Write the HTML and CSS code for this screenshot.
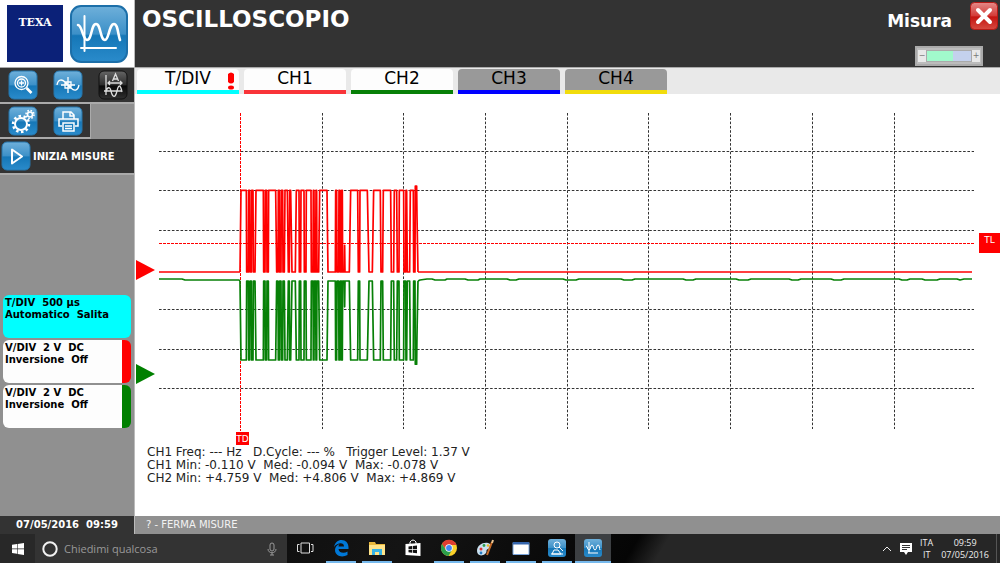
FILE: index.html
```html
<!DOCTYPE html>
<html lang="it">
<head>
<meta charset="utf-8">
<title>Oscilloscopio</title>
<link rel="stylesheet" href="styles.css">
</head>
<body>
<svg class="defs" aria-hidden="true">
  <defs>
    <linearGradient id="blue" x1="0" y1="0" x2="0" y2="1">
      <stop offset="0" stop-color="#6fb0da"/><stop offset=".5" stop-color="#3c90c8"/><stop offset=".53" stop-color="#1577b7"/><stop offset="1" stop-color="#2a8bcb"/>
    </linearGradient>
    <linearGradient id="dark" x1="0" y1="0" x2="0" y2="1">
      <stop offset="0" stop-color="#666"/><stop offset=".5" stop-color="#2c2c2c"/><stop offset=".53" stop-color="#080808"/><stop offset="1" stop-color="#303030"/>
    </linearGradient>
    <linearGradient id="red" x1="0" y1="0" x2="0" y2="1">
      <stop offset="0" stop-color="#e58a88"/><stop offset=".5" stop-color="#d33a36"/><stop offset=".53" stop-color="#c41410"/><stop offset="1" stop-color="#d64a40"/>
    </linearGradient>
    <path id="burst" d="M45 0L48-245H64L65 0H70L71-245H74L75 0H79L80-245H84L85 0H90L93-245H115L116 0H120L121-245H125L126 0H130L131-245H152L155 0H159L160-245H163L164 0H168L169-245H173L174 0H178L180-245H187L190 0H193L194-245H197L201 0H211L214-245H222L223 0H227L228-245H237L238 0H243L244-245H258L259 0H264L265-245H267L268 0H272L273-245H275L276 0H281L284-245H306L309 0H331L332-245H335L336 0H341L342-245H345L346 0H349L350-245H352L353 0H358L359-80L360 0H373L377-245H398L400 0H404L405-245H427L432 0H442L446-245H466L468 0H473L475-245H497L499 0H506L508-245H515L517 0H522L523-245H536L537 0H542L543-245H545L547 0H554L556-245H565L566 0H570L571-258H575L576-170L579 0"/>
  </defs>
</svg>
<div class="app">
  <aside class="sidebar">
    <div class="brand">
      <div class="texa">TEXA</div>
      <svg class="brand-icon" viewBox="0 0 58 58" aria-hidden="true">
        <rect x="1" y="1" width="56" height="56" rx="10" fill="url(#blue)" stroke="#1c6fa9" stroke-width="2"/>
        <g fill="none" stroke="#fff" stroke-linecap="round" stroke-width="2"><path d="M14.500 11v35M11 43h35"/><path stroke-width="2.600" d="M8 20C12 20 13 35 17 35C22 35 21 19 26 19C31 19 30 35 35 35C39 35 39 19 44 19C48 19 48 30 50 35"/></g>
      </svg>
    </div>
    <div class="tools">
      <button class="tool" aria-label="Zoom"><svg viewBox="0 0 30 30"><rect x="1" y="1" width="28" height="28" rx="5" fill="url(#blue)" stroke="#2676ac"/><g fill="none" stroke="#fff" stroke-width="1.300"><circle cx="13.500" cy="13" r="6.500"/><circle cx="13.500" cy="13" r="4"/><path d="M11 13h5M13.500 10.500v5"/><path stroke-width="2.600" d="M18.500 18l5 5"/></g></svg></button>
      <button class="tool" aria-label="Cursori"><svg viewBox="0 0 30 30"><rect x="1" y="1" width="28" height="28" rx="5" fill="url(#blue)" stroke="#2676ac"/><g fill="none" stroke="#fff" stroke-width="1.300"><path d="M4 15C5 9 9 9 12 12L18 18C22 22 25 20 26 15M12 12h6v6h-6zM15 7v16M8 15h14"/></g></svg></button>
      <button class="tool" aria-label="Scala automatica"><svg viewBox="0 0 30 30"><rect x="1" y="1" width="28" height="28" rx="5" fill="url(#dark)" stroke="#111"/><g fill="none" stroke="#ddd" stroke-width="1.300"><path d="M8 5v20M6 21h18M14.500 11l3-7 3 7M15.500 9h4M10 13h14M12 11l-2 2 2 2M22 11l2 2-2 2M8 22c1-5 4-6 5-1s4 9 6 0 4-4 5 1"/></g></svg></button>
    </div>
    <div class="tools tools-short">
      <button class="tool" aria-label="Impostazioni"><svg viewBox="0 0 30 30"><rect x="1" y="1" width="28" height="28" rx="5" fill="url(#blue)" stroke="#2676ac"/><g fill="none" stroke="#fff"><circle cx="13" cy="18" r="6" stroke-width="2"/><circle cx="13" cy="18" r="8" stroke-width="2.500" stroke-dasharray="2.500 2.500"/><circle cx="22" cy="8.500" r="2.500" stroke-width="1.600"/><circle cx="22" cy="8.500" r="4" stroke-width="1.600" stroke-dasharray="1.600 1.540"/></g></svg></button>
      <button class="tool" aria-label="Stampa"><svg viewBox="0 0 30 30"><rect x="1" y="1" width="28" height="28" rx="5" fill="url(#blue)" stroke="#2676ac"/><g fill="none" stroke="#fff" stroke-width="1.500"><path d="M10 13V6h8l3 3v4M17 6v4h4M9 20H6v-7h19v7h-3M10 17h11v8H10zM12 20h7M12 22.500h7"/></g></svg></button>
    </div>
    <button class="start-measure"><svg viewBox="0 0 30 30" aria-hidden="true"><rect x="1" y="1" width="28" height="28" rx="5" fill="url(#blue)" stroke="#2676ac"/><path d="M11 8.500v14L21 15.500z" fill="none" stroke="#fff" stroke-width="2" stroke-linejoin="round"/></svg>INIZIA MISURE</button>
    <div class="cards">
      <button class="card card-time">T/DIV&nbsp; 500 µs<br>Automatico&nbsp; Salita</button>
      <button class="card card-red">V/DIV&nbsp; 2 V&nbsp; DC<br>Inversione&nbsp; Off</button>
      <button class="card card-green">V/DIV&nbsp; 2 V&nbsp; DC<br>Inversione&nbsp; Off</button>
    </div>
    <time class="clock">07/05/2016&nbsp; 09:59</time>
  </aside>
  <main class="main">
    <header class="header">
      <h1 class="title">OSCILLOSCOPIO</h1>
      <div class="header-side">
        <div class="mode"><span>Misura</span><button class="close" aria-label="Chiudi"><svg viewBox="0 0 28 28"><rect x=".5" y=".5" width="27" height="27" rx="4" fill="url(#red)" stroke="#b51a16"/><path d="M8 8l12 12M20 8L8 20" stroke="#fff" stroke-width="4" stroke-linecap="round"/></svg></button></div>
        <div class="battery"><span class="pole">−</span><span class="level"></span><span class="pole">+</span></div>
      </div>
    </header>
    <nav class="tabs">
      <button class="tab tab-time">T/DIV<svg class="alert" viewBox="0 0 8 18" aria-hidden="true"><path d="M1 2q3-3 6 0v8q-3 3-6 0z" fill="red"/><ellipse cx="4" cy="15.500" rx="3" ry="2" fill="red"/></svg></button>
      <button class="tab tab-ch1">CH1</button>
      <button class="tab tab-ch2">CH2</button>
      <button class="tab tab-ch3">CH3</button>
      <button class="tab tab-ch4">CH4</button>
    </nav>
    <svg class="chart" viewBox="0 0 865 351" role="img" aria-label="Tracce CH1 e CH2">
      <path class="grid" d="M24 57.500H839M24 96.500H839M24 136.500H839M24 215.500H839M24 255.500H839M24 294.500H839M187.500 19V335M268.500 19V335M350.500 19V335M432.500 19V335M513.500 19V335M595.500 19V335M677.500 19V335M759.500 19V335"/>
      <path class="trigger" d="M105.500 19V337M24 149.500H840"/>
      <path class="trace trace-red" d="M24 178H105M283 178H837"/>
      <use href="#burst" class="trace trace-red" transform="translate(90 178) scale(.3333)"/>
      <path class="trace trace-green" d="M24 185H47L50 186H104L105 187M283 187L285 186 292 185H297L300 186H310L312 185H330L333 186H343L345 185H372L375 186H381L384 185H428L431 186H441L444 185H486L489 186H497L500 185H548L551 186H558L561 185H601L604 186H613L616 185H654L657 186H663L666 185H696L699 186H706L709 185H764L767 186H772L775 185H787L790 186H802L805 185H822L825 186L829 185H837"/>
      <use href="#burst" class="trace trace-green" transform="translate(90 187) scale(.3333 -.3224)"/>
      <path d="M1 166L20 176L1 186z" fill="red"/>
      <path d="M1 270L20 280L1 290z" fill="green"/>
      <rect x="101" y="338" width="13" height="13" fill="red"/>
      <text class="mark" x="107.500" y="348" text-anchor="middle">TD</text>
      <rect x="844" y="139" width="21" height="20" fill="red"/>
      <text class="mark" x="854.500" y="149" text-anchor="middle">TL</text>
    </svg>
    <div class="readout">CH1 Freq: --- Hz   D.Cycle: --- %   Trigger Level: 1.37 V
CH1 Min: -0.110 V  Med: -0.094 V  Max: -0.078 V
CH2 Min: +4.759 V  Med: +4.806 V  Max: +4.869 V</div>
    <footer class="status">? - FERMA MISURE</footer>
  </main>
</div>
<div class="taskbar">
  <button class="start" aria-label="Start"><svg width="12" height="12" viewBox="0 0 12 12"><path fill="#fff" d="M0 1.800l5-.7v4.500H0zM5.600 1L12 0v5.600H5.600zM0 6.200h5v4.600l-5-.7zM5.600 6.200H12V12l-6.400-1z"/></svg></button>
  <div class="search">
    <svg width="16" height="16" viewBox="0 0 16 16" aria-hidden="true"><circle cx="8" cy="8" r="6.700" fill="none" stroke="#f2f2f2" stroke-width="2"/></svg>
    <input class="search-input" type="text" placeholder="Chiedimi qualcosa" aria-label="Chiedimi qualcosa">
    <svg width="10" height="14" viewBox="0 0 10 14" fill="none" stroke="#999" aria-hidden="true"><rect x="3" y="1" width="4" height="8" rx="2"/><path d="M1 7c0 5 8 5 8 0M5 11v2M3 13h4"/></svg>
  </div>
  <button class="task" aria-label="Visualizzazione attività"><svg viewBox="0 0 18 18" fill="none" stroke="#ddd"><path d="M5 4h8.500v10H5zM3.500 5.500h-2v7h2M15 5.500h2v7h-2"/></svg></button>
  <button class="task open" aria-label="Edge"><svg viewBox="0 0 18 18"><path fill="#0078d7" d="M2 8C3 3.500 6 1 9.500 1C14 1 17 4.500 16.500 10H6.500C7 14 12 15 15.500 12.500V16C10 19 3 17 3 11C3 8 5 6 7.500 5C6.800 5.800 6.500 6.500 6.500 7.500H12C12 3 5.500 3.500 2 8z"/></svg></button>
  <button class="task open" aria-label="Esplora file"><svg viewBox="0 0 18 18"><path fill="#e9b83c" d="M1 3h6l1 2h9v11H1z"/><path fill="#ffe48a" d="M1 6h16v10H1z"/><path fill="#35b3e6" d="M4 10h10v6h-3v-3H7v3H4z"/></svg></button>
  <button class="task" aria-label="Store"><svg viewBox="0 0 18 18"><path fill="#fff" d="M1.500 5l15-1v13l-15-1z"/><path d="M6 5V3q3-4 6 0v2" fill="none" stroke="#fff"/><path fill="#111" d="M4.500 7.500L8 7v3H4.500zM8.700 7L13 6.500V10H8.700zM4.500 10.700H8v3l-3.500-.4zM8.700 10.700H13v3.600l-4.300-.6z"/></svg></button>
  <button class="task open" aria-label="Chrome"><svg viewBox="0 0 18 18"><circle cx="9" cy="9" r="8" fill="#fbd029"/><path fill="#df3d30" d="M2 5A8 8 0 0 1 16.500 6H9L6 11z"/><path fill="#2b9e4b" d="M2 5A8 8 0 0 0 8.500 17L12 11H6z"/><circle cx="9" cy="9" r="3.700" fill="#fff"/><circle cx="9" cy="9" r="2.900" fill="#4285f4"/></svg></button>
  <button class="task open" aria-label="Paint"><svg viewBox="0 0 18 18"><path fill="#c9e0ef" d="M1 12C1 6 7 3 12 4C16 5 16 9 12 10C9 11 12 13 9 15C5 18 1 16 1 12z"/><circle cx="5" cy="10" r="1.500" fill="#d33"/><circle cx="8" cy="6.500" r="1.400" fill="#2a9b4c"/><circle cx="5" cy="14" r="1.400" fill="#277cc4"/><circle cx="12" cy="6.500" r="1.300" fill="#e9b525"/><path d="M11 16l5-13" stroke="#c66a27" stroke-width="2"/><path d="M16 4l1-3" stroke="#edc894" stroke-width="2"/></svg></button>
  <button class="task open" aria-label="Applicazione"><svg viewBox="0 0 18 18"><path fill="#fff" stroke="#79a4db" d="M1 3.500h16v12H1z"/><path fill="#3465ad" d="M1 3h16v2.500H1z"/></svg></button>
  <button class="task open" aria-label="Diagnosi"><svg viewBox="0 0 18 18"><rect width="18" height="18" rx="3" fill="url(#blue)"/><g fill="none" stroke="#fff"><circle cx="9" cy="6" r="3"/><path d="M11 8l4 4M4 15l2-4h4l3 4zM3 15h12"/></g></svg></button>
  <button class="task open active" aria-label="Oscilloscopio"><svg viewBox="0 0 18 18"><rect width="18" height="18" rx="3" fill="url(#blue)"/><path fill="none" stroke="#fff" d="M2 7c2 0 1 4 3 4s1-5 3-5 1 5 3 5 1-5 3-5 1 3 2 5M5 3v11M4 14h10"/></svg></button>
  <div class="tray">
    <svg width="10" height="6" viewBox="0 0 10 6" fill="none" stroke="#eee" aria-hidden="true"><path d="M1 5l4-4 4 4"/></svg>
    <svg width="12" height="12" viewBox="0 0 12 12" aria-hidden="true"><path fill="#fff" d="M0 0h12v9H8l-2 3-2-3H0z"/><path stroke="#333" d="M2 2.500h8M2 4.500h8M2 6.500h5"/></svg>
    <div class="tray-text">ITA<br>IT</div>
    <div class="tray-text">09:59<br>07/05/2016</div>
  </div>
</div>
</body>
</html>
```
FILE: styles.css
```css
* { box-sizing: border-box; }
body {
  margin: 0;
  min-height: 100vh;
  display: flex;
  flex-direction: column;
  background: #fff;
  font-family: "DejaVu Sans", Verdana, sans-serif;
}
button {
  margin: 0;
  padding: 0;
  border: 0;
  background: none;
  font: inherit;
  color: inherit;
}
svg { display: block; flex: none; }
.defs { position: absolute; width: 0; height: 0; }

.app {
  flex: 1;
  display: grid;
  grid-template-columns: 135px minmax(0, 1fr);
}

/* Sidebar */
.sidebar {
  display: flex;
  flex-direction: column;
  background: #909090;
  border-right: 1px solid #bbb;
}
.brand {
  display: flex;
  gap: 7px;
  height: 68px;
  padding: 5px 6px 0 7px;
  background: #fff;
  border-bottom: 1px solid #aaa;
}
.texa {
  width: 57px;
  height: 57px;
  padding-top: 11px;
  background: #0b2178;
  color: #fff;
  font: bold 11px/14px "DejaVu Serif", serif;
  text-align: center;
}
.brand-icon { width: 58px; height: 58px; }
.tools {
  display: flex;
  gap: 15px;
  height: 36px;
  padding: 2px 8px;
  background: #333;
  border-bottom: 2px solid #aaa;
}
.tools-short { width: 91px; border-right: 1px solid #aaa; height: 35px; }
.tool svg, .start-measure svg { width: 30px; height: 30px; }
.tool { align-self: flex-start; }
.start-measure {
  display: flex;
  align-items: center;
  gap: 2px;
  height: 36px;
  padding: 0 1px;
  background: #333;
  border-bottom: 2px solid #aaa;
  color: #fff;
  font-size: 10px;
  font-weight: bold;
}
.cards {
  display: flex;
  flex-direction: column;
  gap: 2px;
  padding: 120px 3px 0;
}
.card {
  display: flex;
  height: 43px;
  padding: 2px;
  border-radius: 6px;
  background: #fdfdfd;
  color: #000;
  font-size: 10px;
  font-weight: bold;
  line-height: 12px;
  text-align: left;
}
.card-time { background: #0ff; }
.card-red { border-right: 9px solid red; }
.card-green { border-right: 9px solid green; }
.clock {
  margin-top: auto;
  height: 18px;
  background: #333;
  color: #fff;
  font-size: 10px;
  font-weight: bold;
  line-height: 18px;
  text-align: center;
}

/* Main area */
.main { display: flex; flex-direction: column; }
.header {
  display: flex;
  justify-content: space-between;
  height: 68px;
  background: #333;
  border-bottom: 1px solid #aaa;
  color: #fff;
}
.title {
  margin: 0;
  padding: 5px 7px;
  font-size: 23px;
  line-height: 28px;
}
.header-side { padding: 2px 2px 0 0; }
.mode {
  display: flex;
  align-items: center;
  gap: 18px;
  font-size: 17px;
  font-weight: bold;
  line-height: 38px;
}
.close { align-self: flex-start; }
.close svg { width: 28px; height: 28px; }
.battery {
  display: flex;
  align-items: center;
  width: 68px;
  height: 20px;
  margin: 6px 15px 0 auto;
  padding: 3px 1px;
  border: 2px solid #aaa;
  background: #bcbcbc;
}
.pole {
  width: 8px;
  background: #e8e8e8;
  color: #777;
  font-size: 8px;
  line-height: 12px;
  text-align: center;
}
.level {
  flex: 1;
  height: 12px;
  border: 1px solid #aaa;
  background: linear-gradient(90deg, #a1f9cc 59%, #c4d1ed 59%);
}
.tabs {
  display: flex;
  gap: 5px;
  height: 26px;
  padding-left: 2px;
  background: #e9e9e9;
}
.tab {
  position: relative;
  width: 102px;
  margin-top: 1px;
  padding-bottom: 2px;
  border-bottom: 4px solid;
  border-radius: 4px 4px 0 0;
  background: #fdfdfd;
  font-size: 17px;
  line-height: 19px;
  color: #000;
}
.tab-time { border-color: #0ff; }
.tab-ch1 { border-color: #f93439; }
.tab-ch2 { border-color: #078007; }
.tab-ch3 { border-color: #00f; background: #999; }
.tab-ch4 { border-color: #f1dc0c; background: #999; }
.alert { position: absolute; right: 4px; top: 3px; width: 8px; height: 18px; }

.chart { width: 100%; height: auto; }
.grid, .trigger { fill: none; stroke-width: 1; }
.grid { stroke: #333; stroke-dasharray: 2.6 1.7; }
.trigger { stroke: red; stroke-dasharray: 3 1; }
.trace { fill: none; stroke-width: 1.7; stroke-linejoin: round; }
.trace-red { stroke: red; }
.trace-green { stroke: #078007; }
#burst { vector-effect: non-scaling-stroke; }
.mark { fill: #fff; font-size: 9px; }

.readout {
  padding: 1px 12px;
  color: #222;
  font-size: 12px;
  line-height: 13px;
  white-space: pre;
}
.status {
  margin-top: auto;
  height: 18px;
  padding-left: 11px;
  background: #909090;
  color: #f3f3f3;
  font-size: 10px;
  line-height: 18px;
}

/* Taskbar */
.taskbar {
  display: flex;
  height: 29px;
  background: linear-gradient(120deg, #050505 0, #141414 40%, #050505 63%, #262626 66%);
  color: #eee;
  font-family: "Open Sans", "Segoe UI", sans-serif;
}
.start {
  display: flex;
  align-items: center;
  justify-content: center;
  width: 35px;
  background: #282828;
}
.search {
  display: flex;
  align-items: center;
  gap: 6px;
  width: 252px;
  padding: 0 10px 0 7px;
  background: #333;
}
.search-input {
  flex: 1;
  min-width: 0;
  padding: 0;
  border: 0;
  background: none;
  color: #ddd;
  font: 11px "Open Sans", "Segoe UI", sans-serif;
}
.search-input::placeholder { color: #999; opacity: 1; }
.task {
  display: flex;
  align-items: center;
  justify-content: center;
  width: 30px;
  margin: 0 3px;
  border-bottom: 2px solid transparent;
}
.task svg { width: 18px; height: 18px; }
.open { border-color: #76b9ed; }
.active { width: 36px; margin: 0; background: #3c3f42; }
.tray {
  display: flex;
  align-items: center;
  gap: 8px;
  margin-left: auto;
  margin-right: 3px;
  padding-right: 7px;
  border-right: 1px solid #555;
}
.tray-text {
  font-size: 9px;
  line-height: 12px;
  text-align: center;
}
```
